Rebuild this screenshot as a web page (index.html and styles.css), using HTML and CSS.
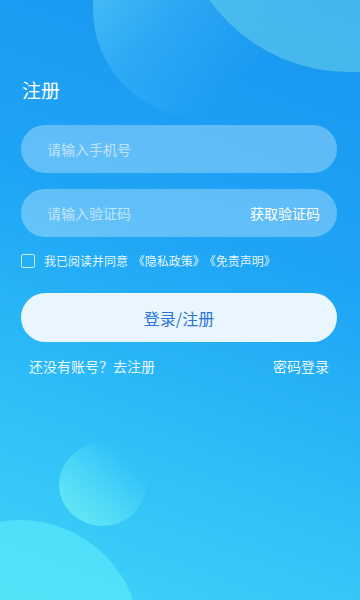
FILE: index.html
```html
<!DOCTYPE html>
<html lang="zh">
<head>
<meta charset="utf-8">
<title>注册</title>
<link rel="stylesheet" href="styles.css">
</head>
<body>
<div class="screen">
  <div class="deco deco-a"></div>
  <div class="deco deco-b"></div>
  <div class="deco deco-c"></div>
  <div class="deco deco-d"></div>
  <main class="content">
    <h1 class="title">注册</h1>
    <div class="field"><span class="placeholder">请输入手机号</span></div>
    <div class="field"><span class="placeholder">请输入验证码</span><span class="get-code">获取验证码</span></div>
    <label class="agree"><span class="box"></span><span class="agree-text">我已阅读并同意 <span class="doc">《隐私政策》</span><span class="doc">《免责声明》</span></span></label>
    <button class="submit">登录/注册</button>
    <div class="links"><span>还没有账号？去注册</span><span>密码登录</span></div>
  </main>
</div>
</body>
</html>
```
FILE: styles.css
```css
* { box-sizing: border-box; }
html, body { margin: 0; padding: 0; }
body {
  font-family: "Noto Sans CJK SC", "Noto Sans", sans-serif;
  color: #fff;
}
.screen {
  position: relative;
  width: 360px;
  height: 600px;
  overflow: hidden;
  background: linear-gradient(200deg, #1896f0 0%, #1ea4f5 40%, #30c2f8 75%, #40d4f8 100%);
}
.deco { position: absolute; border-radius: 50%; }
.deco-b {
  left: 93px; top: -100px; width: 218px; height: 218px;
  background: linear-gradient(135deg, rgba(120,225,250,0.7) 0%, rgba(90,200,250,0.28) 45%, rgba(40,160,245,0) 75%);
}
.deco-a {
  left: 178px; top: -270px; width: 342px; height: 342px;
  background: rgba(125,222,230,0.45);
}
.deco-c {
  left: 59px; top: 443px; width: 87px; height: 83px;
  background: linear-gradient(225deg, rgba(110,230,250,0) 20%, rgba(120,245,245,0.8) 100%);
}
.deco-d {
  left: -100px; top: 520px; width: 240px; height: 240px;
  background: rgba(100,240,250,0.55);
}
.content {
  position: relative;
  padding: 78px 23px 0 21px;
  display: flex;
  flex-direction: column;
}
.title {
  margin: 0 0 0 1px;
  font-size: 19px;
  font-weight: 400;
  line-height: 24px;
}
.field {
  margin-top: 23px;
  height: 48px;
  border-radius: 24px;
  background: rgba(255,255,255,0.3);
  display: flex;
  align-items: center;
  justify-content: space-between;
  padding: 0 17px 0 26px;
  font-size: 14px;
}
.field + .field { margin-top: 16px; }
.placeholder { color: rgba(255,255,255,0.62); }
.get-code { color: #fff; font-size: 14px; }
.agree {
  margin-top: 16px;
  display: flex;
  align-items: center;
  gap: 9px;
  font-size: 12px;
  color: rgba(255,255,255,0.9);
  line-height: 16px;
}
.agree-text { white-space: nowrap; }
.doc { margin-left: 2px; }
.doc + .doc { margin-left: 5px; }
.box {
  width: 14px; height: 14px;
  border: 1px solid rgba(255,255,255,0.75);
  border-radius: 2px;
}
.submit {
  margin-top: 24px;
  height: 49px;
  border: none;
  border-radius: 25px;
  background: #eaf6fd;
  color: #2a74d6;
  font-family: inherit;
  font-size: 16px;
  padding: 0;
}
.links {
  margin-top: 14px;
  display: flex;
  justify-content: space-between;
  padding: 0 8px 0 8px;
  font-size: 14px;
  color: rgba(255,255,255,0.92);
  line-height: 20px;
}
```
